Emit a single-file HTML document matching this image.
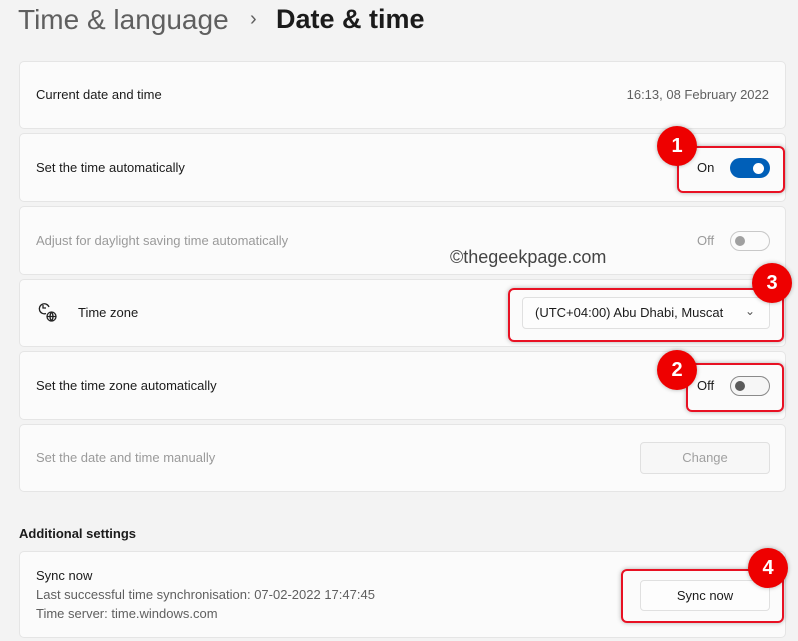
<!DOCTYPE html><html><head><meta charset="utf-8"><style>
body{margin:0;width:798px;height:641px;background:#f3f3f3;font-family:"Segoe UI","Liberation Sans",sans-serif;position:relative;overflow:hidden;color:#1b1b1b}
.a{position:absolute}
.card{position:absolute;left:19px;width:767px;background:#fbfbfb;border:1px solid #e5e5e5;border-radius:5px;box-sizing:border-box}
.t{position:absolute;font-size:13px;white-space:nowrap}
.red{position:absolute;border:2px solid #e81123;border-radius:6px;box-shadow:0 0 5px rgba(0,0,0,.3)}
.num{position:absolute;width:40px;height:40px;border-radius:50%;background:#e00;color:#fff;font:bold 20px "Liberation Sans",sans-serif;text-align:center;line-height:40px;box-shadow:0 0 4px rgba(0,0,0,.3)}
.tog{position:absolute;width:40px;height:20px;border-radius:10px;box-sizing:border-box}
.btn{position:absolute;background:#fdfdfd;border:1px solid #e0e0e0;border-radius:4px;box-sizing:border-box;font-size:13px;text-align:center}
</style></head><body>
<div class="a" style="left:18px;top:4px;font-size:28px;color:#5f5f5f">Time &amp; language</div>
<div class="a" style="left:250px;top:8px;font-size:20px;color:#5f5f5f">›</div>
<div class="a" style="left:276px;top:4px;font-size:27px;font-weight:600;color:#1b1b1b">Date &amp; time</div>

<div class="card" style="top:61px;height:68px"></div>
<div class="t" style="left:36px;top:87px">Current date and time</div>
<div class="t" style="right:29px;top:87px;color:#5f5f5f">16:13, 08 February 2022</div>

<div class="card" style="top:133px;height:69px"></div>
<div class="t" style="left:36px;top:160px">Set the time automatically</div>
<div class="red" style="left:677px;top:146px;width:104px;height:43px"></div>
<div class="t" style="left:697px;top:160px">On</div>
<div class="tog" style="left:730px;top:158px;background:#005fb8"></div>
<div class="a" style="left:753px;top:163px;width:11px;height:11px;border-radius:50%;background:#fff"></div>
<div class="num" style="left:657px;top:126px">1</div>

<div class="card" style="top:206px;height:69px"></div>
<div class="t" style="left:36px;top:233px;color:#9a9a9a">Adjust for daylight saving time automatically</div>
<div class="t" style="left:697px;top:233px;color:#9a9a9a">Off</div>
<div class="tog" style="left:730px;top:231px;border:1px solid #c8c8c8"></div>
<div class="a" style="left:735px;top:236px;width:10px;height:10px;border-radius:50%;background:#a0a0a0"></div>
<div class="a" style="left:450px;top:247px;font-size:18px;color:#444">©thegeekpage.com</div>

<div class="card" style="top:279px;height:68px"></div>
<svg class="a" style="left:37px;top:302px" width="22" height="22" viewBox="0 0 22 22" fill="none" stroke="#222" stroke-width="1.3"><path d="M9 11.5A5 5 0 1 1 12 5" /><path d="M6 3v3h3"/><circle cx="14.5" cy="14.5" r="4.5"/><path d="M10 14.5h9M14.5 10c-2 2.5-2 6.5 0 9M14.5 10c2 2.5 2 6.5 0 9"/></svg>
<div class="t" style="left:78px;top:305px">Time zone</div>
<div class="red" style="left:508px;top:288px;width:272px;height:50px"></div>
<div class="btn" style="left:522px;top:297px;width:248px;height:32px;line-height:30px;text-align:left;padding-left:12px">(UTC+04:00) Abu Dhabi, Muscat</div>
<div class="a" style="left:745px;top:304px;font-size:12px;color:#555">⌄</div>
<div class="num" style="left:752px;top:263px">3</div>

<div class="card" style="top:351px;height:69px"></div>
<div class="t" style="left:36px;top:378px">Set the time zone automatically</div>
<div class="red" style="left:686px;top:363px;width:94px;height:45px"></div>
<div class="t" style="left:697px;top:378px">Off</div>
<div class="tog" style="left:730px;top:376px;border:1px solid #8a8a8a;background:#f6f6f6"></div>
<div class="a" style="left:735px;top:381px;width:10px;height:10px;border-radius:50%;background:#5a5a5a"></div>
<div class="num" style="left:657px;top:350px">2</div>

<div class="card" style="top:424px;height:68px"></div>
<div class="t" style="left:36px;top:450px;color:#9a9a9a">Set the date and time manually</div>
<div class="btn" style="left:640px;top:442px;width:130px;height:32px;line-height:30px;color:#a0a0a0;background:#f7f7f7">Change</div>

<div class="a" style="left:19px;top:526px;font-size:13px;font-weight:600">Additional settings</div>
<div class="card" style="top:551px;height:87px"></div>
<div class="t" style="left:36px;top:568px">Sync now</div>
<div class="t" style="left:36px;top:587px;color:#5f5f5f">Last successful time synchronisation: 07-02-2022 17:47:45</div>
<div class="t" style="left:36px;top:606px;color:#5f5f5f">Time server: time.windows.com</div>
<div class="red" style="left:621px;top:569px;width:159px;height:50px"></div>
<div class="btn" style="left:640px;top:580px;width:130px;height:31px;line-height:29px">Sync now</div>
<div class="num" style="left:748px;top:548px">4</div>
</body></html>
